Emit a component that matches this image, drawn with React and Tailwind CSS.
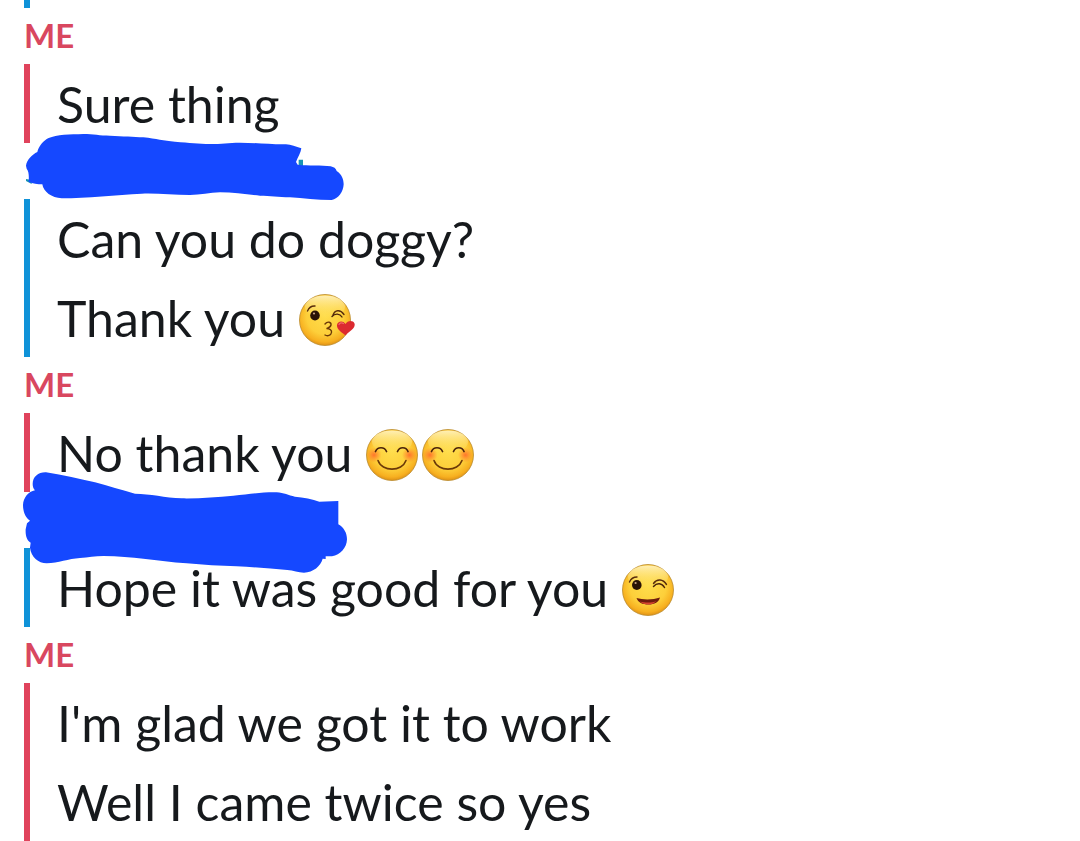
import { useId } from "react";

const FaceBase = ({ id }) => (
    <>
        <defs>
            <radialGradient id={`${id}-face`} cx="0.5" cy="0.42" r="0.6">
                <stop offset="0" stopColor="#ffdd4c" />
                <stop offset="0.6" stopColor="#fdcf3a" />
                <stop offset="0.85" stopColor="#f7b020" />
                <stop offset="1" stopColor="#d98812" />
            </radialGradient>
            <linearGradient id={`${id}-shine`} x1="0" y1="0" x2="0" y2="1">
                <stop offset="0" stopColor="#fff3c4" stopOpacity="0.9" />
                <stop offset="1" stopColor="#ffe566" stopOpacity="0" />
            </linearGradient>
        </defs>
        <circle cx="28" cy="33" r="25.5" fill={`url(#${id}-face)`} stroke="#b98a2c" strokeWidth="0.8" />
        <ellipse cx="28" cy="20" rx="20" ry="11.5" fill={`url(#${id}-shine)`} />
    </>
);

const KissFace = () => {
    const id = useId();
    return (
        <svg role="img" aria-label="Face blowing a kiss" viewBox="0 0 58 62" className="h-[62px] w-[58px] shrink-0">
            <FaceBase id={id} />
            <g fill="none" strokeLinecap="round">
                <path d="M10.5 24C12 20.5 15 18.8 18 19" stroke="#5a2d0c" strokeWidth="1.4" />
                <path d="M36 28C38 23 43 22 47 27.500" stroke="#5a2d0c" strokeWidth="1.4" />
                <path d="M35 29.500C38 26 43 26.500 45 30" stroke="#4a230a" strokeWidth="1.4" />
                <path d="M28 37C30.500 34 34.500 35 34 38C33.500 40.500 31 41 29.500 41.500C33 41.500 35 43.500 34.500 45.500C34 48.500 30.500 49.500 28 48" stroke="#6b3908" strokeWidth="1.4" />
            </g>
            <ellipse cx="18" cy="28.5" rx="4.8" ry="5.1" fill="#2a1206" />
            <circle cx="17" cy="26.5" r="1.1" fill="#c9a080" />
            <path d="M48.500 48.500C45 45.500 39.500 42.500 40 38C40.500 34 46 33 48.500 37C50.500 33.500 56 33 57.500 36.500C59 41.500 52 44.500 48.500 48.500Z" fill="#dc2a30" />
            <path d="M42 37.500C43 35.500 45 35.500 46.500 36.500" fill="none" stroke="#f0686a" strokeWidth="1.2" strokeLinecap="round" />
        </svg>
    );
};

const SmileFace = () => {
    const id = useId();
    return (
        <svg role="img" aria-label="Smiling face" viewBox="0 0 56 62" className="h-[62px] w-14 shrink-0">
            <FaceBase id={id} />
            <defs>
                <radialGradient id={`${id}-cheek`}>
                    <stop offset="0" stopColor="#ff6a2a" stopOpacity="0.9" />
                    <stop offset="1" stopColor="#ff7a2a" stopOpacity="0" />
                </radialGradient>
            </defs>
            <circle cx="10" cy="33" r="7.5" fill={`url(#${id}-cheek)`} />
            <circle cx="45.5" cy="33" r="7.5" fill={`url(#${id}-cheek)`} />
            <g fill="none" strokeLinecap="round">
                <path d="M11.5 29.5C13.5 24.5 20.5 24.5 22.5 29.5M33.5 29.5C35.5 24.500 42 24.500 44 29.500" stroke="#4a230a" strokeWidth="1.7" />
                <path d="M14 38.500C18 50 38 50 42 38.500" stroke="#6b3908" strokeWidth="1.6" />
            </g>
        </svg>
    );
};

const WinkFace = () => {
    const id = useId();
    return (
        <svg role="img" aria-label="Winking face" viewBox="0 0 56 62" className="h-[62px] w-14 shrink-0">
            <FaceBase id={id} />
            <g fill="none" strokeLinecap="round">
                <path d="M9.5 25C11 21.500 14 20 17 20" stroke="#5a2d0c" strokeWidth="1.4" />
                <path d="M33.500 26.500C37 21.500 43 22 46.500 27.500" stroke="#5a2d0c" strokeWidth="1.4" />
                <path d="M33.500 29.500C37 25.500 42 26 44.500 30.500" stroke="#4a230a" strokeWidth="1.5" />
            </g>
            <ellipse cx="16.8" cy="28" rx="4.8" ry="5.1" fill="#2a1206" />
            <circle cx="15.6" cy="26" r="1.1" fill="#c9a080" />
            <path d="M16.500 41C23 43 33 43 40 40.500C39 45 34.500 47.500 28.500 47.500C22.500 47.500 18 45.500 16.500 41Z" fill="#6e1c0e" />
            <path d="M20 44.500C25 46 32 46 36.500 44C34 46.500 31.500 47.500 28.500 47.500C25 47.500 22 46.500 20 44.500Z" fill="#d8452f" />
        </svg>
    );
};

const ScribbleOne = () => (
    <svg aria-hidden="true" viewBox="0 429 1080 168" className="absolute top-0 left-0 h-14 w-[360px] overflow-visible">
        <path d="M78 537L95 540V552L78 543ZM896 479H909V498H896Z" fill="#1793b4" />
        <path
            d="M78 497C80 480 96 464 112 456C116 438 130 422 146 414C170 404 210 403 250 402C280 402 300 407 330 407C370 409 400 410 430 412C470 416 490 423 525 425C570 428 595 432 630 432C665 432 685 428 720 428C765 428 815 434 858 433C873 434 888 440 904 445C903 458 893 472 888 486L893 494C925 498 965 494 992 499C1001 501 1008 505 1010 513C1025 523 1031 538 1031 553C1030 576 1015 596 995 600C950 600 910 595 870 592C835 590 810 588 780 587C740 583 700 577 660 577C630 578 600 585 570 585C520 585 470 579 425 581C350 584 260 595 185 595C155 594 130 575 127 553C113 552 98 551 86 545C87 530 87 514 80 506Z"
            fill="#1548ff"
        />
    </svg>
);

const ScribbleTwo = () => (
    <svg aria-hidden="true" viewBox="0 96 1080 168" className="absolute top-0 left-0 h-14 w-[360px] overflow-visible">
        <path
            d="M98 72C98 50 116 36 138 37C190 45 240 57 285 67C325 77 365 91 405 101C450 101 495 113 545 115C600 116 650 111 700 107C750 102 790 96 830 97C852 98 865 106 885 110C910 112 938 117 958 125L1015 123V193C1032 203 1041 219 1041 238C1040 264 1021 285 996 289L977 289V297L968 296C962 318 940 337 912 338C895 338 880 331 862 330C810 326 760 321 710 319C660 317 610 315 560 310C515 307 475 300 430 296C395 293 355 288 310 288C285 288 265 293 240 294C205 296 175 309 140 310C115 310 93 290 90 263L92 248C80 242 76 226 77 208L81 190L90 182C75 172 69 153 69 135C70 113 85 95 105 91C100 86 98 79 98 72Z"
            fill="#1548ff"
        />
    </svg>
);

const messages = [
    { id: 1, me: true, lines: [{ text: "Sure thing" }] },
    { id: 2, me: false, cover: ScribbleOne, lines: [{ text: "Can you do doggy?" }, { text: "Thank you", emoji: [KissFace] }] },
    { id: 3, me: true, lines: [{ text: "No thank you", emoji: [SmileFace, SmileFace] }] },
    { id: 4, me: false, cover: ScribbleTwo, lines: [{ text: "Hope it was good for you", emoji: [WinkFace] }] },
    { id: 5, me: true, lines: [{ text: "I'm glad we got it to work" }, { text: "Well I came twice so yes" }] },
];

const MessageGroup = ({ me, cover: Cover, lines }) => (
    <section>
        <header className="relative flex h-14 items-center px-6">
            {me && <h2 className="text-[33px] font-bold text-[#d9475f]">ME</h2>}
            {Cover && <Cover />}
        </header>
        <div className={`ml-6 border-l-6 pl-[27px] ${me ? "border-[#e0435c]" : "border-[#0f92d8]"}`}>
            {lines.map((line) => (
                <p key={line.text} className="flex min-h-[79px] items-center text-[50px] leading-[60px] text-[#16191c]">
                    {line.text}
                    {line.emoji && (
                        <span className="ml-3 flex">
                            {line.emoji.map((Face, i) => <Face key={i} />)}
                        </span>
                    )}
                </p>
            ))}
        </div>
    </section>
);

export default function App() {
    return (
        <main className="bg-white font-['Lato',sans-serif]">
            <div className="ml-6 h-2 border-l-6 border-[#0f92d8]" />
            {messages.map((m) => <MessageGroup key={m.id} {...m} />)}
        </main>
    );
}
